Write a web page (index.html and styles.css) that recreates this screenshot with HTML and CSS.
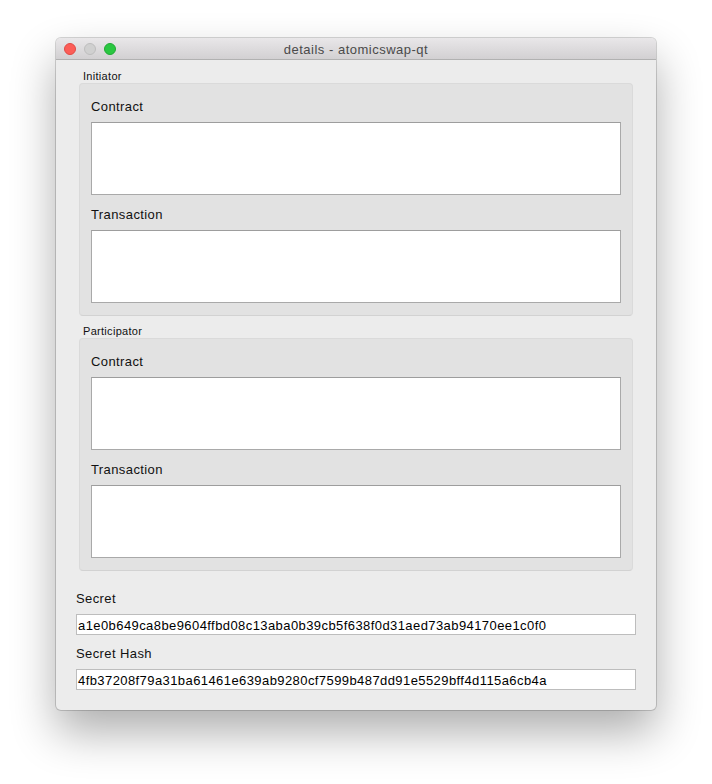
FILE: index.html
```html
<!DOCTYPE html>
<html>
<head>
<meta charset="utf-8">
<link rel="stylesheet" href="styles.css">
</head>
<body>
<div class="window">
  <div class="titlebar">
    <div class="lights">
      <span class="light red"></span>
      <span class="light grey"></span>
      <span class="light green"></span>
    </div>
    <div class="title">details - atomicswap-qt</div>
  </div>
  <div class="content">
    <div class="group-title">Initiator</div>
    <div class="group">
      <div class="label">Contract</div>
      <div class="textarea"></div>
      <div class="label second">Transaction</div>
      <div class="textarea"></div>
    </div>
    <div class="group-title next">Participator</div>
    <div class="group">
      <div class="label">Contract</div>
      <div class="textarea"></div>
      <div class="label second">Transaction</div>
      <div class="textarea"></div>
    </div>
    <div class="label field-label first">Secret</div>
    <div class="input">a1e0b649ca8be9604ffbd08c13aba0b39cb5f638f0d31aed73ab94170ee1c0f0</div>
    <div class="label field-label">Secret Hash</div>
    <div class="input">4fb37208f79a31ba61461e639ab9280cf7599b487dd91e5529bff4d115a6cb4a</div>
  </div>
</div>
</body>
</html>
```

FILE: styles.css
```css
html, body {
  margin: 0;
  background: #ffffff;
}
body {
  padding: 38px 0 0 56px;
  min-height: 784px;
  box-sizing: border-box;
  font-family: "Liberation Sans", Arial, sans-serif;
  color: #1a1a1a;
}
.window {
  width: 600px;
  height: 672px;
  box-sizing: border-box;
  background: #ececec;
  border-radius: 5px;
  box-shadow: 0 0 0 1px rgba(0,0,0,0.16), 0 22px 45px rgba(0,0,0,0.32);
  overflow: hidden;
}
.titlebar {
  height: 21px;
  border-bottom: 1px solid #b1b1b1;
  background: linear-gradient(#e9e7e9, #d2d0d2);
  display: flex;
  align-items: center;
  position: relative;
}
.lights {
  display: flex;
  gap: 8px;
  padding-left: 8px;
  padding-top: 1px;
}
.light {
  width: 12px;
  height: 12px;
  border-radius: 50%;
  box-sizing: border-box;
}
.red { background: #fc5d57; border: 1px solid #df4a45; }
.grey { background: #d0d0d0; border: 1px solid #bdbdbd; }
.green { background: #2ac741; border: 1px solid #20a934; }
.title {
  position: absolute;
  left: 0;
  right: 0;
  top: 4px;
  text-align: center;
  font-size: 13px;
  line-height: 16px;
  letter-spacing: 0.5px;
  color: #4a4a4a;
}
.content {
  padding: 9px 20px 20px 20px;
}
.group-title {
  font-size: 11px;
  line-height: 13px;
  padding-top: 1px;
  padding-left: 7px;
  letter-spacing: 0.3px;
  color: #111;
}
.group-title.next {
  margin-top: 8px;
}
.group {
  margin: 0 3px;
  background: #e2e2e2;
  border: 1px solid #dadada;
  border-bottom-color: #d2d2d2;
  border-radius: 4px;
  padding: 14px 11px 12px 11px;
}
.label {
  font-size: 13px;
  line-height: 16px;
  padding-top: 1px;
  letter-spacing: 0.4px;
  color: #111;
  margin-bottom: 7px;
}
.label.second {
  margin-top: 11px;
}
.textarea {
  height: 73px;
  box-sizing: border-box;
  background: #ffffff;
  border: 1px solid #a9a9a9;
  border-top-color: #9d9d9d;
}
.field-label {
  margin-top: 10px;
}
.field-label.first {
  margin-top: 19px;
}
.input {
  height: 21px;
  box-sizing: border-box;
  background: #ffffff;
  border: 1px solid #bdbdbd;
  font-size: 13px;
  line-height: 17px;
  padding-top: 2px;
  padding-left: 1px;
  letter-spacing: 0.42px;
  color: #000;
  white-space: nowrap;
  overflow: hidden;
}
```
